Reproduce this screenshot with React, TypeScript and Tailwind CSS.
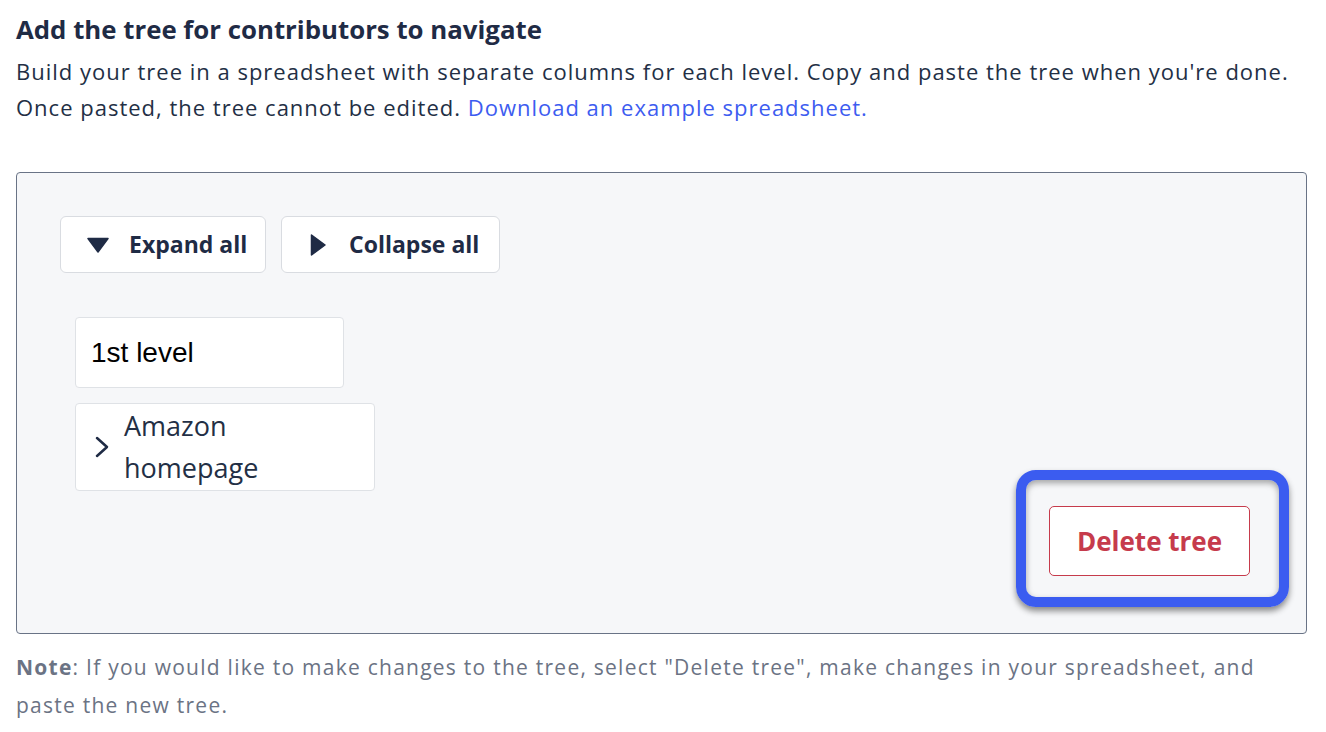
import React from 'react';

const font = { fontFamily: '"Open Sans", Lato, sans-serif' };

function Caret({ dir }: { dir: 'down' | 'right' }) {
  return dir === 'down' ? (
    <svg width="22" height="16" viewBox="0 0 22 16" className="text-[#1f2b45]">
      <path d="M1 1.5 H21 L11 15 Z" fill="currentColor" strokeLinejoin="round" stroke="currentColor" strokeWidth="1.5" />
    </svg>
  ) : (
    <svg width="16" height="22" viewBox="0 0 16 22" className="text-[#1f2b45]">
      <path d="M1.5 1 V21 L15 11 Z" fill="currentColor" strokeLinejoin="round" stroke="currentColor" strokeWidth="1.5" />
    </svg>
  );
}

export default function App() {
  return (
    <div className="min-h-[732px] w-full bg-white px-4 pt-[13px] text-[#232f45]" style={font}>
      <h1 className="text-[25.8px] leading-[32px] font-bold text-[#1f2b45]">Add the tree for contributors to navigate</h1>
      <p className="mt-2 text-[22px] leading-[36px] tracking-[1px]">
        Build your tree in a spreadsheet with separate columns for each level. Copy and paste the tree when you're done.
        <br />
        Once pasted, the tree cannot be edited.{' '}
        <a href="#" className="text-[#3d5cf0]">Download an example spreadsheet.</a>
      </p>

      <div className="mt-[47px] flex h-[462px] w-[1291px] justify-between rounded-[4px] border border-[#697386] bg-[#f6f7f9] pb-[26px] pl-[43px] pr-[17px] pt-[43px]">
        <div className="flex flex-col">
          <div className="flex gap-[15px]">
            <button className="flex h-[57px] w-[206px] items-center gap-[20px] rounded-[6px] border border-[#d9dce1] bg-white pl-[26px] text-[23px] font-bold text-[#1f2b45]">
              <Caret dir="down" />
              Expand all
            </button>
            <button className="flex h-[57px] w-[219px] items-center gap-[23px] rounded-[6px] border border-[#d9dce1] bg-white pl-[28px] text-[23px] font-bold text-[#1f2b45]">
              <Caret dir="right" />
              Collapse all
            </button>
          </div>

          <div className="ml-[15px] mt-[44px] flex flex-col gap-[15px]">
            <div
              className="flex h-[71px] w-[269px] items-center rounded-[4px] border border-[#dfe2e6] bg-white pl-[15px] text-[28px] text-black"
              style={{ fontFamily: '"Liberation Sans", Arial, sans-serif' }}
            >
              1st level
            </div>
            <div className="flex h-[88px] w-[300px] items-center rounded-[4px] border border-[#dfe2e6] bg-white pl-[19px]">
              <svg width="14" height="22" viewBox="0 0 14 22" className="shrink-0 text-[#1f2b45]">
                <path d="M2 2 L12 11 L2 20" fill="none" stroke="currentColor" strokeWidth="2.5" strokeLinecap="round" strokeLinejoin="round" />
              </svg>
              <span className="ml-[15px] text-[27px] leading-[42px] text-[#232f45]">
                Amazon
                <br />
                homepage
              </span>
            </div>
          </div>
        </div>

        <div className="self-end rounded-[20px] border-[10px] border-[#3b5cf0] pb-[21px] pl-[23px] pr-[29px] pt-[26px] shadow-[0_4px_6px_rgba(0,0,0,0.45),inset_0_3px_6px_rgba(0,0,0,0.35)]">
          <button className="flex h-[70px] w-[201px] items-center justify-center rounded-[5px] border border-[#c63b4c] bg-white text-[26px] font-bold text-[#c63b4c]">
            Delete tree
          </button>
        </div>
      </div>

      <p className="mt-[14px] text-[21px] leading-[38px] tracking-[1.25px] text-[#6b7384]">
        <span className="font-bold">Note</span>: If you would like to make changes to the tree, select "Delete tree", make changes in your spreadsheet, and
        <br />
        paste the new tree.
      </p>
    </div>
  );
}
